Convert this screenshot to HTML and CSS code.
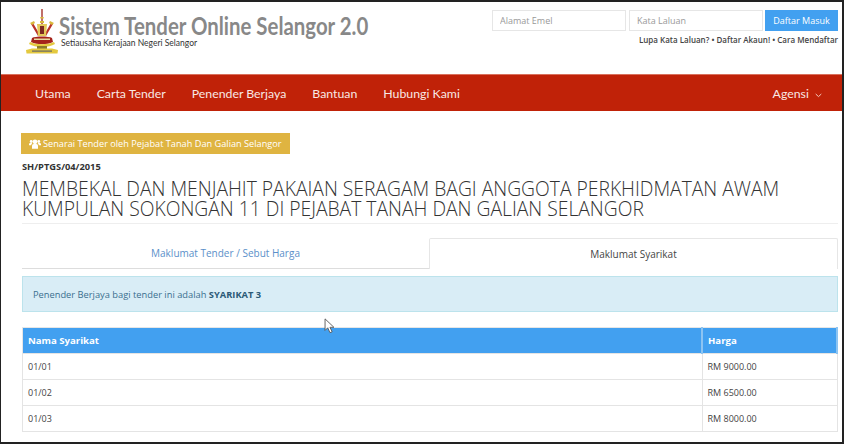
FILE: index.html
```html
<!DOCTYPE html>
<html lang="ms">
<head>
    <meta charset="UTF-8">
    <meta name="viewport" content="width=device-width, initial-scale=1.0">
    <title>Sistem Tender Online Selangor 2.0</title>
    <link rel="stylesheet" href="styles.css">
</head>
<body>
    <div class="frame">
        <header class="top">
            <div class="brand">
                <svg class="crest" width="34" height="46" viewBox="0 0 34 46">
                    <path d="M16.300 0h1.400v15h-1.400z" fill="#a5332a"/>
                    <path d="M15.300 8h3.400v1.500h-3.400zM15 12h4v2h-4z" fill="#d9b93c"/>
                    <path d="M6 15l2-1 7 12-2 1zM28 15l-2-1-7 12 2 1z" fill="#b8322a"/>
                    <path d="M5 14l4-2 1 2-3 2zM29 14l-4-2-1 2 3 2z" fill="#d9b93c"/>
                    <path d="M12 15h10l-1 12h-8z" fill="#e3c95a"/>
                    <path d="M15 17h4v8h-4z" fill="#7d2a22"/>
                    <path d="M7 29c3-2 17-2 20 0l1 4c-6 3-16 3-22 0z" fill="#a5231c"/>
                    <path d="M9 29.500h16v1.500H9z" fill="#e6d9a0"/>
                    <path d="M5 33c6 3 18 3 24 0l1 2c-6 4-20 4-26 0z" fill="#e4c93f"/>
                    <path d="M12 37h10v3H12z" fill="#8a7a2c"/>
                    <path d="M1 41l6-1.500h20l6 1.500-.5 3.500h-31z" fill="#e4c93f"/>
                    <path d="M7 41.500h20v1.200H7z" fill="#666"/>
                </svg>
                <div class="brand-text">
                    <div class="site-name">Sistem Tender Online Selangor 2.0</div>
                    <div class="site-sub">Setiausaha Kerajaan Negeri Selangor</div>
                </div>
            </div>
            <div class="login">
                <form class="login-row">
                    <input class="login-input" type="text" placeholder="Alamat Emel">
                    <input class="login-input" type="password" placeholder="Kata Laluan">
                    <button class="login-btn" type="button">Daftar Masuk</button>
                </form>
                <div class="login-links">Lupa Kata Laluan? • Daftar Akaun! • Cara Mendaftar</div>
            </div>
        </header>

        <nav class="nav">
            <a href="#">Utama</a>
            <a href="#">Carta Tender</a>
            <a href="#">Penender Berjaya</a>
            <a href="#">Bantuan</a>
            <a href="#">Hubungi Kami</a>
            <a href="#" class="nav-right">Agensi
                <svg class="caret" width="7" height="5" viewBox="0 0 7 5"><path d="M.7 1l2.800 2.600L6.300 1" fill="none" stroke="#f3c9bd" stroke-width="1"/></svg>
            </a>
        </nav>

        <main class="content">
            <a href="#" class="agency-btn">
                <svg class="users" width="12" height="10" viewBox="0 0 14 11">
                    <circle cx="7" cy="3" r="2.700" fill="#fff"/>
                    <circle cx="2.600" cy="2.500" r="1.700" fill="#fff"/>
                    <circle cx="11.400" cy="2.500" r="1.700" fill="#fff"/>
                    <path d="M3.500 7.500C3.500 6 5 5.600 7 5.600s3.500.4 3.500 1.900V11h-7z" fill="#fff"/>
                    <path d="M0 5.500C0 4.700 1 4.400 2.600 4.400c.6 0 1 .1 1.300.2-.8.500-1.300 1.300-1.300 2.400H0zM14 5.500c0-.8-1-1.100-2.600-1.100-.6 0-1 .1-1.300.2.800.500 1.300 1.300 1.300 2.400H14z" fill="#fff"/>
                </svg>
                Senarai Tender oleh Pejabat Tanah Dan Galian Selangor
            </a>
            <div class="ref">SH/PTGS/04/2015</div>
            <h1>MEMBEKAL DAN MENJAHIT PAKAIAN SERAGAM BAGI ANGGOTA PERKHIDMATAN AWAM KUMPULAN SOKONGAN 11 DI PEJABAT TANAH DAN GALIAN SELANGOR</h1>

            <div class="tabs">
                <a href="#" class="tab">Maklumat Tender / Sebut Harga</a>
                <a href="#" class="tab active">Maklumat Syarikat</a>
            </div>

            <div class="alert"><span>Penender Berjaya bagi tender ini adalah <b>SYARIKAT 3</b></span></div>

            <table class="result">
                <thead>
                    <tr><th>Nama Syarikat</th><th class="col-price">Harga</th></tr>
                </thead>
                <tbody>
                    <tr><td>01/01</td><td>RM 9000.00</td></tr>
                    <tr><td>01/02</td><td>RM 6500.00</td></tr>
                    <tr><td>01/03</td><td>RM 8000.00</td></tr>
                </tbody>
            </table>
        </main>

        <svg class="cursor" width="11" height="16" viewBox="0 0 12 18">
            <path d="M1 1v13l3-3 2.500 5.500 2.500-1L6.500 10.500H11z" fill="#fff" stroke="#555" stroke-width="1"/>
        </svg>
    </div>
</body>
</html>
```

FILE: styles.css
```css
* {
    box-sizing: border-box;
}

body {
    margin: 0;
    font-family: "Open Sans", sans-serif;
    background-color: #ffffff;
    color: #333333;
}

a {
    text-decoration: none;
}

.frame {
    position: relative;
    width: 844px;
    height: 444px;
    border: 2px solid #222222;
    border-left-width: 1px;
    overflow: hidden;
    background-color: #ffffff;
}

/* cabecera */
.top {
    display: flex;
    justify-content: space-between;
    height: 72px;
    padding: 6px 4px 0 24px;
}

.brand {
    display: flex;
}

.crest {
    margin-top: 1px;
}

.brand-text {
    padding-top: 6px;
}

.site-name {
    width: 310px;
    font-family: "Lato", sans-serif;
    font-size: 24px;
    font-weight: 700;
    line-height: 23px;
    white-space: nowrap;
    transform: scaleX(.85);
    transform-origin: left center;
    color: #888888;
}

.site-sub {
    font-family: "Lato", sans-serif;
    font-size: 8.500px;
    line-height: 10px;
    margin-top: 1px;
    margin-left: 2px;
    color: #333333;
}

.login {
    display: flex;
    flex-direction: column;
    align-items: flex-end;
    padding-top: 2px;
}

.login-row {
    display: flex;
    gap: 3px;
}

.login-input {
    width: 134px;
    height: 21px;
    padding: 0 7px;
    border: 1px solid #e6e6e6;
    font-family: inherit;
    font-size: 9px;
    background-color: #ffffff;
}

.login-input::placeholder {
    color: #999999;
}

.login-btn {
    width: 73px;
    height: 21px;
    margin-left: -1px;
    padding: 0;
    border: none;
    font-family: inherit;
    font-size: 9px;
    color: #ffffff;
    background-color: #42a0f0;
}

.login-links {
    margin-top: 3px;
    font-size: 8px;
    font-weight: 600;
    line-height: 11px;
    color: #444444;
}

/* menu */
.nav {
    display: flex;
    gap: 26px;
    align-items: center;
    height: 37px;
    padding: 0 20px 0 34px;
    border-top: 1px solid #d9705c;
    background-color: #c02208;
}

.nav a {
    font-family: "Lato", sans-serif;
    font-size: 12.300px;
    color: #f8e8e4;
}

.nav .nav-right {
    margin-left: auto;
}

.caret {
    margin-left: 3px;
}

/* contenido */
.content {
    padding: 22px 4px 0 21px;
}

.agency-btn {
    display: flex;
    align-items: center;
    gap: 2px;
    width: 269px;
    height: 21px;
    margin-left: -1px;
    padding: 0 8px;
    font-size: 9.200px;
    color: #ffffff;
    background-color: #dfb441;
}

.ref {
    margin-top: 7px;
    font-size: 9.300px;
    font-weight: 700;
    line-height: 12px;
    color: #333333;
}

h1 {
    margin: 6px 0 0;
    padding-bottom: 4px;
    font-size: 19.300px;
    font-weight: 300;
    line-height: 20px;
    border-bottom: 1px solid #eeeeee;
    color: #333333;
}

.tabs {
    display: flex;
    margin-top: 14px;
}

.tab {
    flex: 1;
    display: flex;
    align-items: center;
    justify-content: center;
    height: 31px;
    font-size: 10px;
    color: #5b8fc9;
    border-bottom: 1px solid #dddddd;
}

.tab.active {
    color: #444444;
    border: 1px solid #e6e6e6;
    border-bottom: none;
    border-radius: 2px 2px 0 0;
}

.alert {
    display: flex;
    align-items: center;
    height: 36px;
    margin-top: 7px;
    padding: 0 10px;
    font-size: 9.300px;
    color: #3a6f8f;
    background-color: #d9edf6;
    border: 1px solid #bce3ec;
}

.alert b {
    color: #2b5a76;
}

.result {
    width: 100%;
    margin-top: 15px;
    border-collapse: collapse;
    border: 1px solid #e6e6e6;
    font-size: 9px;
}

.result th {
    height: 26px;
    padding: 0 5px;
    text-align: left;
    font-size: 9.600px;
    font-weight: 700;
    color: #ffffff;
    background-color: #42a0f0;
    border-right: 2px solid #8cc4f2;
}

.result td {
    height: 26px;
    padding: 0 5px;
    color: #444444;
    border: 1px solid #e4e4e4;
}

.col-price {
    width: 135px;
}

/* puntero de la captura */
.cursor {
    position: absolute;
    left: 323px;
    top: 316px;
}
```
